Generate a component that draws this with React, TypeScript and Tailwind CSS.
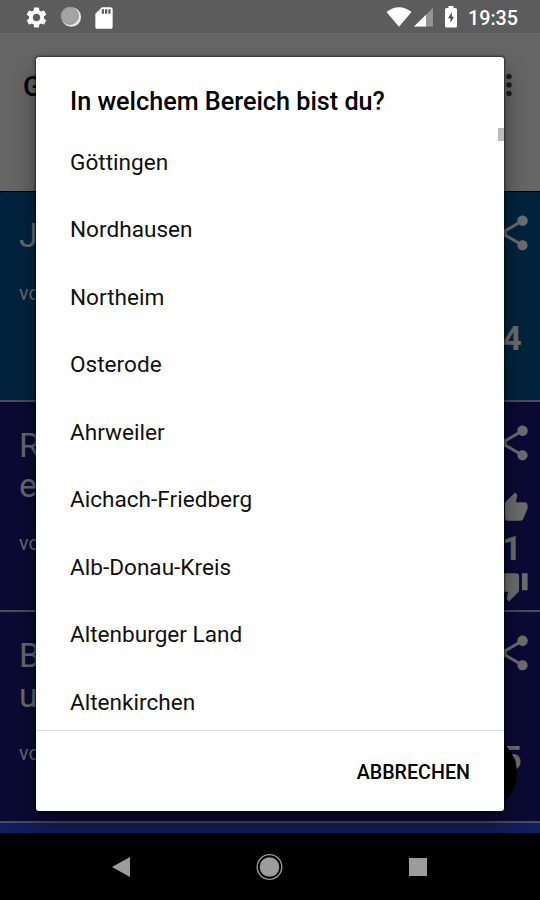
import { MdMoreVert, MdSdCard, MdSettings, MdShare, MdThumbDown, MdThumbUp } from "react-icons/md";

const regions: string[] = [
  "Göttingen",
  "Nordhausen",
  "Northeim",
  "Osterode",
  "Ahrweiler",
  "Aichach-Friedberg",
  "Alb-Donau-Kreis",
  "Altenburger Land",
  "Altenkirchen",
];

function StatusBar() {
  return (
    <header className="flex h-[33px] shrink-0 items-center bg-[#5c5c5c] pl-[24px] pr-[22px] pt-px text-white">
      <MdSettings className="size-[25px]" />
      <svg className="ml-[11px] size-[22px]" viewBox="0 0 22 22">
        <circle cx="11.3" cy="11" r="9.8" fill="#e8e8e8" />
        <circle cx="9.8" cy="9.8" r="8.6" fill="#a3a3a3" stroke="#969696" />
      </svg>
      <MdSdCard className="ml-[9px] mt-px size-[26px]" />
      <svg className="ml-auto h-[20px] w-[26px]" viewBox="0 0 26 20">
        <path d="M0.5 5C8 -1.4 18 -1.4 25.500 5L13 19.800Z" fill="#fff" />
      </svg>
      <svg className="ml-[2px] mt-px size-[19px]" viewBox="0 0 19 19">
        <path d="M19 0V18.500H0Z" fill="#949494" />
        <path d="M12 6.800V18.500H0Z" fill="#fff" />
      </svg>
      <svg className="ml-[12px] h-[22px] w-[12px]" viewBox="0 0 12 22">
        <path d="M3.500 0H8.500V2H10.500Q12 2 12 3.500V20Q12 21.500 10.500 21.500H1.500Q0 21.500 0 20V3.500Q0 2 1.500 2H3.500Z" fill="#fff" />
        <path d="M6.800 6L3.200 12.300H5.500V17L8.900 10.800H6.800Z" fill="#4a4a4a" />
      </svg>
      <span className="ml-[11px] mt-[3px] w-[50px] whitespace-nowrap text-[19.7px] font-medium leading-none">19:35</span>
    </header>
  );
}

function ShareIcon() {
  return <MdShare className="mt-[20px] size-[42px] shrink-0" />;
}

type CardProps = {
  lines: string[];
  className: string;
  children: React.ReactNode;
};

function Card({ lines, className, children }: CardProps) {
  return (
    <article className={`flex justify-between rounded-t-[3px] border-b-2 border-[#4c4c58] pl-[19px] pr-[7px] text-[#666b6e] ${className}`}>
      <div className="pt-[23px]">
        {lines.map((line) => (
          <p key={line} className="text-[34px] leading-[40px]">{line}</p>
        ))}
        <p className="mt-[27px] text-[19.7px] leading-[23px]">vo</p>
      </div>
      <div className="flex w-[42px] flex-col items-center text-[#6c6d6c]">{children}</div>
    </article>
  );
}

function NavBar() {
  return (
    <nav className="flex h-[67px] shrink-0 items-center justify-between bg-black pl-[111px] pr-[113px]">
      <svg className="size-[20px]" viewBox="0 0 20 20">
        <path d="M1 10L19 0V20Z" fill="#9c9c9c" />
      </svg>
      <svg className="size-[28px]" viewBox="0 0 28 28">
        <circle cx="13.5" cy="14" r="12.300" fill="none" stroke="#9c9c9c" strokeWidth="1.300" />
        <circle cx="13.5" cy="14" r="9.800" fill="#9c9c9c" />
      </svg>
      <span className="size-[18px] bg-[#9c9c9c]" />
    </nav>
  );
}

function RegionDialog() {
  return (
    <section
      role="dialog"
      className="absolute left-[36px] top-[57px] flex h-[754px] w-[468px] flex-col rounded-[3px] bg-white text-black shadow-[0_0_2px_1px_rgba(0,0,0,0.5),0_12px_24px_0px_rgba(0,0,0,0.45)]"
    >
      <h1 className="h-[71px] shrink-0 pl-[34px] pt-[30px] text-[25.2px] font-medium leading-[30px]">In welchem Bereich bist du?</h1>
      <div className="relative h-[602px] shrink-0 overflow-hidden">
        <ul className="pt-px">
          {regions.map((region) => (
            <li key={region} className="flex h-[67.5px] items-center pl-[34px] text-[22.6px] text-[#111]">{region}</li>
          ))}
        </ul>
        <span className="absolute right-0 top-0 h-[13px] w-[6px] bg-[#bdbdbd]" />
      </div>
      <footer className="flex flex-1 items-center justify-end border-t border-[#dcdcdc] pr-[34px] pt-[4px]">
        <button className="text-[19.7px] font-medium">ABBRECHEN</button>
      </footer>
    </section>
  );
}

export default function App() {
  return (
    <main className="relative flex h-[900px] w-[540px] flex-col overflow-hidden bg-[#080830] font-[Roboto,sans-serif]">
      <StatusBar />
      <div className="flex h-[158px] shrink-0 justify-between bg-[#666] pl-[23px] pr-[14px] text-[#1c1c1c]">
        <span className="mt-[33px] text-[28px] font-medium text-black">G</span>
        <MdMoreVert className="mt-[35px] size-[34px]" />
      </div>
      <div className="flex flex-1 flex-col overflow-hidden border-t border-black">
        <Card lines={["J"]} className="h-[210px] shrink-0 bg-[#00243d]">
          <ShareIcon />
          <b className="mt-[64px] text-[34px] leading-[40px]">4</b>
        </Card>
        <Card lines={["R", "e"]} className="h-[210px] shrink-0 bg-[#0a0a34]">
          <ShareIcon />
          <MdThumbUp className="mt-[27px] size-[34px] shrink-0" />
          <b className="mt-[3px] text-[34px] leading-[40px]">1</b>
          <MdThumbDown className="mt-[1px] size-[34px] shrink-0" />
        </Card>
        <Card lines={["B", "u"]} className="h-[211px] shrink-0 bg-[#0a0a34]">
          <ShareIcon />
          <b className="mt-[64px] text-[34px] leading-[40px]">5</b>
        </Card>
        <div className="flex-1 bg-[#111e5e]" />
      </div>
      <NavBar />
      <span className="absolute left-[439px] top-[734px] size-[78px] rounded-full bg-black" />
      <RegionDialog />
    </main>
  );
}
